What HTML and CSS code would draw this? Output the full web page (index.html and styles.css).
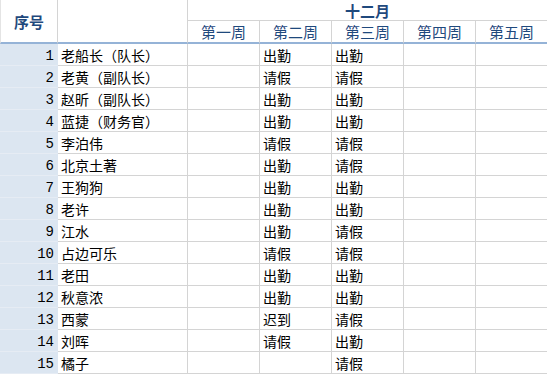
FILE: index.html
```html
<!DOCTYPE html>
<html lang="zh">
<head>
<meta charset="utf-8">
<title>考勤表</title>
<link rel="stylesheet" href="styles.css">
</head>
<body>
<div class="sheet">
  <div class="cell hd seq-hd">序号</div>
  <div class="cell hd name-hd"></div>
  <div class="cell hd month">十二月</div>
  <div class="cell hd week">第一周</div>
  <div class="cell hd week">第二周</div>
  <div class="cell hd week">第三周</div>
  <div class="cell hd week">第四周</div>
  <div class="cell hd week">第五周</div>

  <div class="cell num">1</div><div class="cell txt">老船长（队长）</div><div class="cell txt"></div><div class="cell txt">出勤</div><div class="cell txt">出勤</div><div class="cell txt"></div><div class="cell txt"></div>
  <div class="cell num">2</div><div class="cell txt">老黄（副队长）</div><div class="cell txt"></div><div class="cell txt">请假</div><div class="cell txt">请假</div><div class="cell txt"></div><div class="cell txt"></div>
  <div class="cell num">3</div><div class="cell txt">赵昕（副队长）</div><div class="cell txt"></div><div class="cell txt">出勤</div><div class="cell txt">出勤</div><div class="cell txt"></div><div class="cell txt"></div>
  <div class="cell num">4</div><div class="cell txt">蓝捷（财务官）</div><div class="cell txt"></div><div class="cell txt">出勤</div><div class="cell txt">出勤</div><div class="cell txt"></div><div class="cell txt"></div>
  <div class="cell num">5</div><div class="cell txt">李泊伟</div><div class="cell txt"></div><div class="cell txt">请假</div><div class="cell txt">请假</div><div class="cell txt"></div><div class="cell txt"></div>
  <div class="cell num">6</div><div class="cell txt">北京土著</div><div class="cell txt"></div><div class="cell txt">出勤</div><div class="cell txt">请假</div><div class="cell txt"></div><div class="cell txt"></div>
  <div class="cell num">7</div><div class="cell txt">王狗狗</div><div class="cell txt"></div><div class="cell txt">出勤</div><div class="cell txt">出勤</div><div class="cell txt"></div><div class="cell txt"></div>
  <div class="cell num">8</div><div class="cell txt">老许</div><div class="cell txt"></div><div class="cell txt">出勤</div><div class="cell txt">出勤</div><div class="cell txt"></div><div class="cell txt"></div>
  <div class="cell num">9</div><div class="cell txt">江水</div><div class="cell txt"></div><div class="cell txt">出勤</div><div class="cell txt">请假</div><div class="cell txt"></div><div class="cell txt"></div>
  <div class="cell num">10</div><div class="cell txt">占边可乐</div><div class="cell txt"></div><div class="cell txt">请假</div><div class="cell txt">请假</div><div class="cell txt"></div><div class="cell txt"></div>
  <div class="cell num">11</div><div class="cell txt">老田</div><div class="cell txt"></div><div class="cell txt">出勤</div><div class="cell txt">出勤</div><div class="cell txt"></div><div class="cell txt"></div>
  <div class="cell num">12</div><div class="cell txt">秋意浓</div><div class="cell txt"></div><div class="cell txt">出勤</div><div class="cell txt">出勤</div><div class="cell txt"></div><div class="cell txt"></div>
  <div class="cell num">13</div><div class="cell txt">西蒙</div><div class="cell txt"></div><div class="cell txt">迟到</div><div class="cell txt">请假</div><div class="cell txt"></div><div class="cell txt"></div>
  <div class="cell num">14</div><div class="cell txt">刘晖</div><div class="cell txt"></div><div class="cell txt">请假</div><div class="cell txt">出勤</div><div class="cell txt"></div><div class="cell txt"></div>
  <div class="cell num">15</div><div class="cell txt">橘子</div><div class="cell txt"></div><div class="cell txt"></div><div class="cell txt">请假</div><div class="cell txt"></div><div class="cell txt"></div>
</div>
</body>
</html>
```

FILE: styles.css
```css
html, body {
  margin: 0;
  padding: 0;
  background: #ffffff;
  overflow: hidden;
}

.sheet {
  display: grid;
  grid-template-columns: 58px 130px 72px 72px 72px 72px 72px;
  grid-template-rows: 21px 23px;
  grid-auto-rows: 22px;
  width: 548px;
  font-family: "Noto Sans CJK SC", "Noto Sans", sans-serif;
  font-size: 14px;
  color: #000;
}

.cell {
  box-sizing: border-box;
  border-right: 1px solid #d4d4d4;
  border-bottom: 1px solid #d4d4d4;
  display: flex;
  align-items: center;
  white-space: nowrap;
  overflow: hidden;
  line-height: 1;
}

.hd {
  color: #1f497d;
  justify-content: center;
}

.seq-hd {
  grid-row: 1 / span 2;
  grid-column: 1;
  font-weight: bold;
  font-size: 15px;
  border-bottom: 2px solid #95b3d7;
  border-left: 1px solid #e4e4e4;
}

.name-hd {
  grid-row: 1 / span 2;
  grid-column: 2;
  border-bottom: 2px solid #95b3d7;
}

.month {
  grid-column: 3 / span 5;
  grid-row: 1;
  font-weight: bold;
  font-size: 15px;
  padding-top: 1px;
}

.week {
  grid-row: 2;
  border-bottom: 2px solid #95b3d7;
  font-size: 15px;
}

.num {
  background: #dce6f1;
  justify-content: flex-end;
  padding-right: 3px;
  font-family: "Liberation Mono", "DejaVu Sans Mono", monospace;
  font-size: 14px;
  border-bottom-color: #e6ecf4;
  border-right-color: #dce6f1;
  padding-top: 2px;
}

.txt {
  padding-left: 3px;
  padding-top: 1px;
}
```
